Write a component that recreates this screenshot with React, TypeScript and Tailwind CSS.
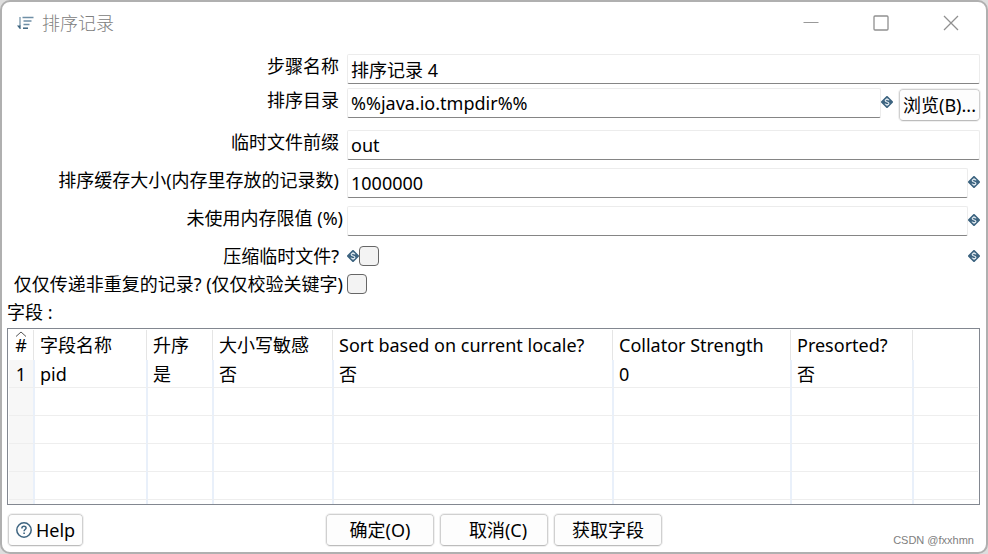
import type { InputHTMLAttributes, ReactNode } from "react";

const columns = [
  { label: "#", width: "w-[24px]" },
  { label: "字段名称", width: "w-[113px]" },
  { label: "升序", width: "w-[66px]" },
  { label: "大小写敏感", width: "w-[120px]" },
  { label: "Sort based on current locale?", width: "w-[280px]" },
  { label: "Collator Strength", width: "w-[178px]" },
  { label: "Presorted?", width: "w-[122px]" },
  { label: "", width: "w-auto" },
];

const rows = [
  ["1", "pid", "是", "否", "否", "0", "否", ""],
  ["", "", "", "", "", "", "", ""],
  ["", "", "", "", "", "", "", ""],
  ["", "", "", "", "", "", "", ""],
  ["", "", "", "", "", "", "", ""],
];

function SortIcon() {
  return (
    <svg width="17" height="14" viewBox="0 0 17 14" fill="none" stroke="#6f8fa6" aria-hidden="true">
      <path d="M3 1v9" strokeWidth="1.2" />
      <path d="M0 9.5h3.6v3.5h-0.8z" fill="#3d6480" stroke="none" />
      <path d="M5.5 1.5h11M6.5 5h8M6.5 8.5h6" strokeWidth="1.3" />
      <path d="M6 12.2h5" stroke="#3d6480" strokeWidth="1.5" />
    </svg>
  );
}

function VariableIcon() {
  return (
    <svg width="12" height="12" viewBox="0 0 12 12" className="shrink-0" aria-hidden="true">
      <path d="M6 1L11 6L6 11L1 6z" fill="#3d6480" stroke="#3d6480" strokeWidth="2" strokeLinejoin="round" />
      <path
        d="M8 4.4C7.7 3.6 6.9 3.3 6 3.3C4.9 3.3 4.2 3.8 4.2 4.6C4.2 6.4 7.9 5.6 7.9 7.4C7.9 8.2 7.1 8.7 6 8.7C5 8.7 4.3 8.4 4 7.6M6 2v1.3M6 8.7v1.3"
        fill="none"
        stroke="#dbe5ec"
        strokeWidth="1.2"
      />
    </svg>
  );
}

function HelpIcon() {
  return (
    <svg width="16" height="16" viewBox="0 0 16 16" fill="none" stroke="#3d6480" aria-hidden="true">
      <circle cx="8" cy="8" r="7.2" strokeWidth="1.5" />
      <path d="M5.9 6.4C5.9 5 6.8 4.3 8 4.3C9.2 4.3 10.1 5 10.1 6.1C10.1 7.5 8.1 7.5 8.1 9.2" strokeWidth="1.5" />
      <path d="M8.1 10.4v1.5" strokeWidth="1.6" />
    </svg>
  );
}

interface RowProps {
  id: string;
  label: string;
  children: ReactNode;
  wide?: boolean;
  className?: string;
}

function Row({ id, label, children, wide, className = "h-[30px]" }: RowProps) {
  return (
    <div className={`flex ${className}`}>
      <label
        htmlFor={id}
        className={`w-[340px] shrink-0 whitespace-nowrap text-right leading-6 ${wide ? "pr-1" : "pr-2"}`}
      >
        {label}
      </label>
      {children}
    </div>
  );
}

function TextInput(props: InputHTMLAttributes<HTMLInputElement>) {
  return (
    <input
      type="text"
      className="h-[30px] min-w-0 flex-1 rounded-[2px] border border-[#ececec] border-b-[#858585] bg-white px-[3px] outline-none"
      {...props}
    />
  );
}

function CheckBox({ id }: { id: string }) {
  return (
    <input
      id={id}
      type="checkbox"
      className="size-5 shrink-0 appearance-none rounded-[4px] border border-[#666666] bg-[#f3f3f3] checked:bg-[#3d6480]"
    />
  );
}

function Button({ children, className }: { children: ReactNode; className: string }) {
  return (
    <button
      type="button"
      className={`flex h-8 items-center justify-center whitespace-nowrap rounded-[4px] border border-[#d0d0d0] border-b-[#bcbcbc] bg-[#fdfdfd] outline outline-[#f0f0f0] ${className}`}
    >
      {children}
    </button>
  );
}

export default function App() {
  return (
    <div className="min-h-screen bg-[#dedede] font-['Noto_Sans','Noto_Sans_CJK_SC',sans-serif] text-[18px] leading-6 text-black">
      <main className="flex min-h-screen flex-col rounded-[10px] border-2 border-[#b0b0b0] bg-white">
        {/* Title bar */}
        <header className="flex h-[42px] items-center pl-[15px] pr-[27px] text-[#808080]">
          <SortIcon />
          <h1 className="ml-2 flex-1 font-light">排序记录</h1>
          <div className="flex gap-[54px]">
            <button type="button" aria-label="Minimize">
              <svg width="16" height="16" viewBox="0 0 16 16" fill="none" stroke="#999999">
                <path d="M0.5 7.5h15" />
              </svg>
            </button>
            <button type="button" aria-label="Maximize">
              <svg width="16" height="16" viewBox="0 0 16 16" fill="none" stroke="#909090">
                <rect x="1" y="1" width="14" height="14" rx="1" strokeWidth="1.3" />
              </svg>
            </button>
            <button type="button" aria-label="Close">
              <svg width="16" height="16" viewBox="0 0 16 16" fill="none" stroke="#909090">
                <path d="M1 1l14 14M15 1L1 15" strokeWidth="1.3" />
              </svg>
            </button>
          </div>
        </header>

        {/* Step settings */}
        <form className="flex flex-1 flex-col pl-[5px] pr-[6px] pt-[10px]">
          <Row id="step-name" label="步骤名称">
            <TextInput id="step-name" defaultValue="排序记录 4" />
          </Row>
          <Row id="sort-dir" label="排序目录" className="mt-1 h-[30px]">
            <TextInput id="sort-dir" defaultValue="%%java.io.tmpdir%%" />
            <div className="pt-2">
              <VariableIcon />
            </div>
            <div className="ml-[6px] pt-px">
              <Button className="w-[81px]">浏览(B)...</Button>
            </div>
          </Row>
          <Row id="prefix" label="临时文件前缀" className="mt-3 h-[30px]">
            <TextInput id="prefix" defaultValue="out" />
          </Row>
          <Row id="cache-size" label="排序缓存大小(内存里存放的记录数)" className="mt-2 h-[30px]">
            <TextInput id="cache-size" defaultValue="1000000" />
            <div className="pt-2">
              <VariableIcon />
            </div>
          </Row>
          <Row id="free-memory" label="未使用内存限值 (%)" wide className="mt-2 h-[30px]">
            <TextInput id="free-memory" />
            <div className="pt-2">
              <VariableIcon />
            </div>
          </Row>
          <Row id="compress" label="压缩临时文件?" className="mt-2 h-6 items-center">
            <VariableIcon />
            <CheckBox id="compress" />
            <span className="flex-1" />
            <VariableIcon />
          </Row>
          <Row id="unique" label="仅仅传递非重复的记录? (仅仅校验关键字)" wide className="mt-1 h-6 items-center">
            <CheckBox id="unique" />
          </Row>
          <h2 className="mt-1 h-[28px]">字段 :</h2>

          {/* Fields grid */}
          <div className="h-[177px] overflow-hidden border border-[#828790] p-px">
            <table className="w-full table-fixed border-separate border-spacing-0 text-left">
              <thead>
                <tr className="h-[30px]">
                  {columns.map((col, index) => (
                    <th
                      key={index}
                      className={`relative whitespace-nowrap p-0 font-normal ${col.width} ${
                        index === 0 ? "text-center" : "border-l border-[#e5e5e5] pl-[6px]"
                      }`}
                    >
                      {index === 0 && (
                        <svg
                          width="12"
                          height="6"
                          viewBox="0 0 12 6"
                          fill="none"
                          stroke="#555555"
                          className="absolute left-[6px] top-px"
                          aria-hidden="true"
                        >
                          <path d="M1 5.5l5-4.5l5 4.5" />
                        </svg>
                      )}
                      {col.label}
                    </th>
                  ))}
                </tr>
              </thead>
              <tbody>
                {rows.map((row, index) => (
                  <tr key={index} className="h-7">
                    {row.map((cell, i) => (
                      <td
                        key={i}
                        className={`h-7 border-b border-b-[#eeeeee] p-0 ${
                          i === 0 ? "bg-[#f7f7f7] text-center" : "border-l-2 border-l-[#e9f0fa] pl-[5px]"
                        }`}
                      >
                        {cell}
                      </td>
                    ))}
                  </tr>
                ))}
                <tr className="h-1">
                  {columns.map((col, i) => (
                    <td key={i} className={`h-1 p-0 ${i === 0 ? "bg-[#f7f7f7]" : "border-l-2 border-l-[#e9f0fa]"}`} />
                  ))}
                </tr>
              </tbody>
            </table>
          </div>
        </form>

        {/* Buttons */}
        <footer className="grid grid-cols-[1fr_auto_1fr] px-[6px] pb-[6px] pt-[9px]">
          <div>
            <Button className="w-[75px] gap-1">
              <HelpIcon />
              Help
            </Button>
          </div>
          <div className="flex gap-[6px]">
            <Button className="w-[108px]">确定(O)</Button>
            <Button className="w-[108px] pl-2">取消(C)</Button>
            <Button className="w-[108px]">获取字段</Button>
          </div>
          <p className="self-end pr-[6px] text-right font-['Liberation_Sans',sans-serif] text-[11px] leading-3 text-[#808080]">
            CSDN @fxxhmn
          </p>
        </footer>
      </main>
    </div>
  );
}
